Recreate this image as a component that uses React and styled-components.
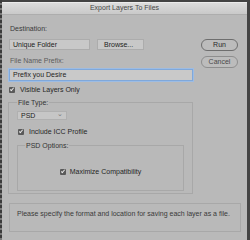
import styled, { createGlobalStyle } from 'styled-components'

const GlobalStyle = createGlobalStyle`
	html, body {
		margin: 0;
		padding: 0;
		background: #444444;
	}
	body {
		width: 250px;
		height: 240px;
		overflow: hidden;
		font-family: "Liberation Sans", Arial, sans-serif;
		font-size: 7px;
		line-height: 9px;
		color: #2e2e2e;
	}
`

export default function App() {
	return (
		<>
			<GlobalStyle />
			<Frame>
				<Window>
					<TitleBar>Export Layers To Files</TitleBar>
					<Body>
						<MainColumn>
							<Label>Destination:</Label>
							<FieldRow>
								<TextBox width={81}>Unique Folder</TextBox>
								<FlatButton>Browse...</FlatButton>
							</FieldRow>
							<Label muted>File Name Prefix:</Label>
							<PrefixBox>Prefix you Desire</PrefixBox>
							<CheckRow>
								<Check />
								Visible Layers Only
							</CheckRow>
							<Group>
								<Legend>File Type:</Legend>
								<Select>
									PSD
									<Chevron>⌄</Chevron>
								</Select>
								<CheckRow indent>
									<Check />
									Include ICC Profile
								</CheckRow>
								<InnerGroup>
									<Legend>PSD Options:</Legend>
									<CenterRow>
										<Check />
										Maximize Compatibility
									</CenterRow>
								</InnerGroup>
							</Group>
						</MainColumn>
						<SideColumn>
							<PillButton>Run</PillButton>
							<PillButton secondary>Cancel</PillButton>
						</SideColumn>
					</Body>
					<InfoBox>Please specify the format and location for saving each layer as a file.</InfoBox>
				</Window>
			</Frame>
		</>
	)
}

const Frame = styled.div`
	display: flex;
	padding: 2px 0 0 2px;
	height: 240px;
	box-sizing: border-box;
	background: repeating-linear-gradient(to bottom, #3c3c3c 0 3px, #7a7a7a 3px 5px) left top / 2px 100% no-repeat, #444444;
`

const Window = styled.div`
	width: 245px;
	height: 238px;
	background: #b9b9b9;
	display: flex;
	flex-direction: column;
`

const TitleBar = styled.div`
	height: 12px;
	line-height: 12px;
	text-align: center;
	color: #474747;
	background: linear-gradient(to bottom, #dedede, #c9c9c9);
	border-bottom: 1px solid #adadad;
	box-shadow: inset 0 1px 0 #ececec;
`

const Body = styled.div`
	display: grid;
	grid-template-columns: 184px 37px;
	column-gap: 8px;
	padding: 9px 0 0 7px;
`

const MainColumn = styled.div`
	display: flex;
	flex-direction: column;
`

const SideColumn = styled.div`
	display: flex;
	flex-direction: column;
	gap: 5px;
	padding-top: 15px;
`

const Label = styled.div`
	padding-left: 1px;
	color: ${props => (props.muted ? '#5c5c5c' : '#3a3a3a')};
`

const FieldRow = styled.div`
	display: flex;
	gap: 7px;
	margin-top: 6px;
	margin-bottom: 6px;
`

const TextBox = styled.div`
	width: ${props => props.width}px;
	height: 11px;
	box-sizing: border-box;
	padding-left: 3px;
	line-height: 10px;
	background: #c8c8c8;
	border: 1px solid #acacac;
	color: #222222;
`

const FlatButton = styled.div`
	width: 47px;
	height: 11px;
	box-sizing: border-box;
	padding-left: 6px;
	line-height: 10px;
	background: #c8c8c8;
	border: 1px solid #acacac;
	color: #222222;
`

const PrefixBox = styled.div`
	height: 12px;
	margin-top: 4px;
	box-sizing: border-box;
	padding-left: 3px;
	line-height: 10px;
	background: #c9c9c9;
	border: 1px solid #7fa8db;
	box-shadow: 0 0 0 1px #9dbce3;
	color: #1f1f1f;
`

const CheckRow = styled.div`
	display: flex;
	align-items: center;
	gap: 5px;
	margin-top: ${props => (props.indent ? '7px' : '4px')};
	padding-left: ${props => (props.indent ? '1px' : '0')};
	color: #262626;
`

const Check = styled.span`
	position: relative;
	width: 6px;
	height: 6px;
	flex: none;
	border-radius: 1px;
	background: #5a5a5a;

	&::after {
		content: '';
		position: absolute;
		left: 2px;
		top: 0px;
		width: 1px;
		height: 3px;
		border: solid #e8e8e8;
		border-width: 0 1px 1px 0;
		transform: rotate(40deg);
	}
`

const Group = styled.fieldset`
	margin: 4px 0 0 -1px;
	padding: 4px 8px 2px 8px;
	border: 1px solid #a8a8a8;
	min-width: 0;
`

const Legend = styled.legend`
	padding: 0 1px;
	color: #333333;
`

const Select = styled.div`
	position: relative;
	width: 50px;
	height: 9px;
	box-sizing: border-box;
	padding-left: 3px;
	line-height: 8px;
	background: #c6c6c6;
	border: 1px solid #b0b0b0;
	color: #222222;
`

const Chevron = styled.span`
	position: absolute;
	right: 3px;
	top: -2px;
	color: #777777;
	font-size: 7px;
`

const InnerGroup = styled.fieldset`
	margin: 5px 0 0 0;
	padding: 0 7px 0 7px;
	height: 48px;
	border: 1px solid #a8a8a8;
	min-width: 0;
`

const CenterRow = styled.div`
	display: flex;
	align-items: center;
	justify-content: center;
	gap: 4px;
	margin-top: 17px;
	color: #262626;
`

const PillButton = styled.div`
	height: 12px;
	box-sizing: border-box;
	line-height: 10px;
	text-align: center;
	border-radius: 6px;
	background: #bcbcbc;
	border: 1px solid ${props => (props.secondary ? '#8e8e8e' : '#6e6e6e')};
	color: ${props => (props.secondary ? '#4a4a4a' : '#2a2a2a')};
`

const InfoBox = styled.div`
	margin: 9px 6px 0 7px;
	height: 29px;
	box-sizing: border-box;
	padding: 5px 0 0 7px;
	border: 1px solid #a8a8a8;
	color: #3a3a3a;
	white-space: nowrap;
`
